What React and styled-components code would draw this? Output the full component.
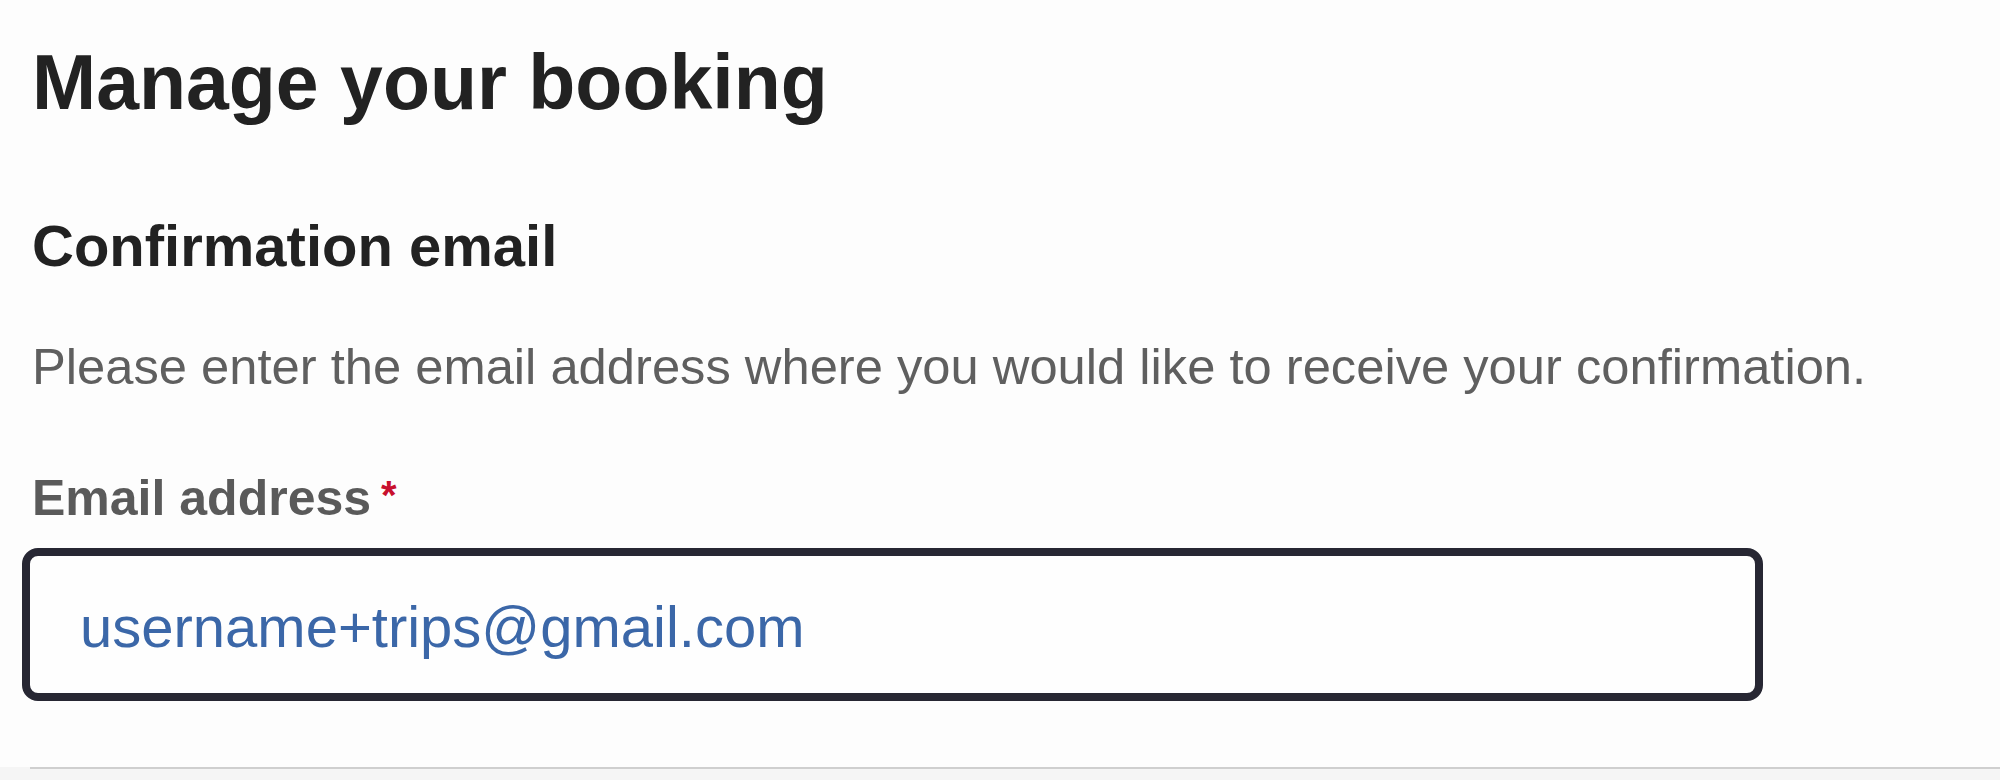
import React from 'react'
import styled, { createGlobalStyle } from 'styled-components'

const GlobalStyle = createGlobalStyle`
    html, body {
        margin: 0;
        padding: 0;
        background: #fdfdfd;
        font-family: "Liberation Sans", Arial, Helvetica, sans-serif;
    }
`

const Pagina = styled.div`
    width: 2000px;
    height: 780px;
    display: flex;
    flex-direction: column;
    overflow: hidden;
`

const Formulario = styled.div`
    display: flex;
    flex-direction: column;
    padding: 44px 32px 0 32px;
`

const Titulo = styled.h1`
    margin: 0;
    font-size: 77px;
    line-height: 77px;
    font-weight: bold;
    color: #222222;
`

const Subtitulo = styled.h2`
    margin: 96px 0 0 0;
    font-size: 58px;
    line-height: 58px;
    font-weight: bold;
    color: #222222;
`

const Descricao = styled.p`
    margin: 67px 0 0 0;
    font-size: 50.7px;
    line-height: 49px;
    color: #5f5f5f;
`

const Rotulo = styled.label`
    margin-top: 79px;
    font-size: 50px;
    line-height: 50px;
    font-weight: bold;
    color: #5a5a5a;
`

const Obrigatorio = styled.span`
    margin-left: 10px;
    font-size: 40px;
    vertical-align: 6px;
    color: #c8102e;
`

const CampoEmail = styled.input`
    box-sizing: border-box;
    margin: 25px 0 0 -10px;
    width: 1741px;
    height: 153px;
    padding: 4px 0 0 50px;
    border: 8px solid #272733;
    border-radius: 16px;
    background: #fefefe;
    font-family: "Liberation Sans", Arial, Helvetica, sans-serif;
    font-size: 58px;
    line-height: 58px;
    color: #3b67a8;
    outline: none;
`

const Rodape = styled.div`
    flex: 1;
    margin-top: 66px;
    background: #f5f5f5;
`

const Linha = styled.div`
    margin-left: 30px;
    border-top: 2px solid #cfcfcf;
`

function App() {
    return (
        <Pagina>
            <GlobalStyle />
            <Formulario>
                <Titulo>Manage your booking</Titulo>
                <Subtitulo>Confirmation email</Subtitulo>
                <Descricao>Please enter the email address where you would like to receive your confirmation.</Descricao>
                <Rotulo htmlFor="email">
                    Email address<Obrigatorio>*</Obrigatorio>
                </Rotulo>
                <CampoEmail id="email" type="email" defaultValue="username+trips@gmail.com" />
            </Formulario>
            <Rodape>
                <Linha />
            </Rodape>
        </Pagina>
    )
}

export default App
